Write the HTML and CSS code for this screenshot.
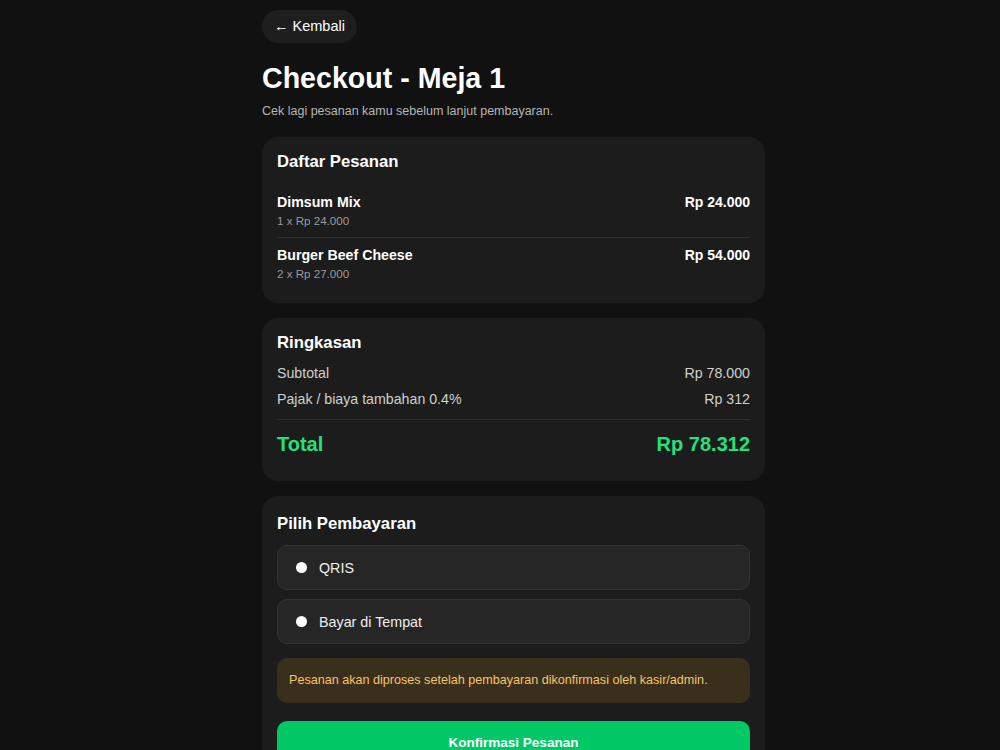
FILE: index.html
```html
<!DOCTYPE html>
<html lang="id">
<head>
    <meta charset="UTF-8">
    <meta name="viewport" content="width=device-width, initial-scale=1.0">
    <title>Checkout - Meja 1</title>
    <link rel="stylesheet" href="styles.css">
</head>
<body>

    <div class="page">
        <a class="back-btn" href="#">&larr; Kembali</a>

        <h1 class="title">Checkout - Meja 1</h1>
        <p class="subtitle">Cek lagi pesanan kamu sebelum lanjut pembayaran.</p>

        <!-- Daftar pesanan -->
        <div class="card">
            <div class="card-title">Daftar Pesanan</div>
            <div class="item">
                <div>
                    <div class="item-name">Dimsum Mix</div>
                    <div class="item-qty">1 x Rp 24.000</div>
                </div>
                <div class="item-price">Rp 24.000</div>
            </div>
            <div class="item">
                <div>
                    <div class="item-name">Burger Beef Cheese</div>
                    <div class="item-qty">2 x Rp 27.000</div>
                </div>
                <div class="item-price">Rp 54.000</div>
            </div>
        </div>

        <!-- Ringkasan -->
        <div class="card">
            <div class="card-title">Ringkasan</div>
            <div class="summary-row">
                <span>Subtotal</span>
                <span>Rp 78.000</span>
            </div>
            <div class="summary-row">
                <span>Pajak / biaya tambahan 0.4%</span>
                <span>Rp 312</span>
            </div>
            <div class="total-row">
                <span>Total</span>
                <span>Rp 78.312</span>
            </div>
        </div>

        <!-- Pembayaran -->
        <div class="card card-payment">
            <div class="card-title">Pilih Pembayaran</div>
            <label class="pay-option">
                <span class="radio"></span>
                QRIS
            </label>
            <label class="pay-option">
                <span class="radio"></span>
                Bayar di Tempat
            </label>
            <div class="notice">Pesanan akan diproses setelah pembayaran dikonfirmasi oleh kasir/admin.</div>
            <button class="confirm-btn" type="button">Konfirmasi Pesanan</button>
        </div>
    </div>

</body>
</html>
```

FILE: styles.css
```css
body {
    margin: 0;
    background-color: #111111;
    color: #ffffff;
    font-family: "Liberation Sans", Arial, sans-serif;
}

.page {
    width: 503px;
    margin: 0 0 0 262px;
    padding-top: 10px;
}

.back-btn {
    display: inline-block;
    background-color: #1e1e1e;
    color: #ffffff;
    text-decoration: none;
    font-size: 14.5px;
    line-height: 17px;
    padding: 8px 12px 8px 12px;
    border-radius: 999px;
}

.title {
    font-size: 28.6px;
    line-height: 32px;
    font-weight: bold;
    margin: 19px 0 9px;
}

.subtitle {
    font-size: 12.5px;
    line-height: 16px;
    color: #b5b5b5;
    margin: 0 0 18px;
}

.card {
    background-color: #1c1c1c;
    border-radius: 16px;
    padding: 15px 15px 14px;
    margin-bottom: 15px;
}

.card-title {
    font-size: 16.7px;
    line-height: 20px;
    font-weight: bold;
    margin-bottom: 13px;
}

/* Daftar pesanan */
.item {
    display: flex;
    justify-content: space-between;
    padding: 9px 0 9px;
}

.item + .item {
    border-top: 1px solid #2e2e2e;
    padding-bottom: 8px;
}

.item-name,
.item-price {
    font-size: 14.2px;
    line-height: 17px;
    font-weight: bold;
}

.item-price {
    font-size: 14px;
}

.item-qty {
    font-size: 11.6px;
    line-height: 15px;
    color: #9a9a9a;
    margin-top: 2px;
}

/* Ringkasan */
.card-title + .summary-row {
    margin-top: -2px;
}

.summary-row {
    display: flex;
    justify-content: space-between;
    font-size: 14.2px;
    line-height: 18px;
    color: #cfcfcf;
    margin-bottom: 8px;
}

.total-row {
    display: flex;
    justify-content: space-between;
    border-top: 1px solid #2e2e2e;
    margin-top: 11px;
    padding: 12px 0 11px;
    font-size: 20px;
    line-height: 24px;
    font-weight: bold;
    color: #22e27c;
}

/* Pembayaran */
.card-payment {
    padding-top: 18px;
}

.card-payment .card-title {
    margin-bottom: 11px;
}

.pay-option {
    display: flex;
    align-items: center;
    gap: 12px;
    height: 43px;
    padding: 0 18px;
    margin-bottom: 9px;
    background-color: #262626;
    border: 1px solid #333333;
    border-radius: 10px;
    font-size: 14.3px;
    color: #eeeeee;
    cursor: pointer;
}

.radio {
    width: 11px;
    height: 11px;
    border-radius: 50%;
    background-color: #ffffff;
}

.notice {
    margin-top: 14px;
    padding: 14px 12px 15px;
    background-color: #3a2f1c;
    border-radius: 10px;
    color: #f5c565;
    font-size: 12.6px;
    line-height: 16px;
}

.confirm-btn {
    display: block;
    width: 100%;
    margin-top: 18px;
    height: 42px;
    border: none;
    border-radius: 10px;
    background-color: #00c864;
    color: #ffffff;
    font-family: inherit;
    font-size: 13.5px;
    font-weight: bold;
    cursor: pointer;
}
```
